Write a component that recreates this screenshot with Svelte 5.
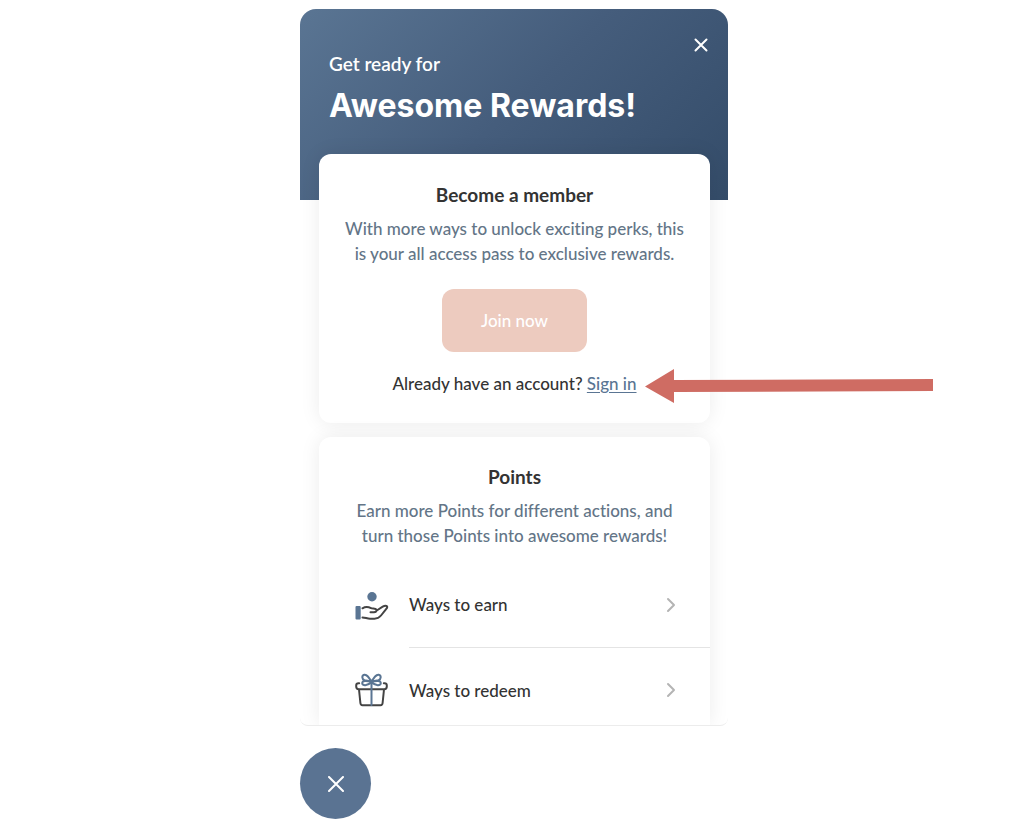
<script>
  const ways = [
    { label: 'Ways to earn', icon: 'earn' },
    { label: 'Ways to redeem', icon: 'redeem' }
  ];
</script>

<main>
  <div class="widget">
    <section class="panel">
      <header>
        <button class="close" aria-label="Close">
          <svg width="14" height="14" viewBox="0 0 14 14"><path d="M1.5 1.5 12.5 12.5M12.5 1.5 1.5 12.5" /></svg>
        </button>
        <p>Get ready for</p>
        <h1>Awesome Rewards!</h1>
      </header>

      <div class="cards">
        <article class="card member">
          <h2>Become a member</h2>
          <p class="copy">With more ways to unlock exciting perks, this<br />is your all access pass to exclusive rewards.</p>
          <button class="join">Join now</button>
          <p class="account">Already have an account? <a href="#signin">Sign in</a></p>
        </article>

        <article class="card points">
          <h2>Points</h2>
          <p class="copy">Earn more Points for different actions, and<br />turn those Points into awesome rewards!</p>
          <ul>
            {#each ways as way}
              <li>
                <a class="way" href={'#' + way.icon}>
                  {#if way.icon === 'earn'}
                    <svg class="icon" width="34" height="34" viewBox="0 0 34 34">
                      <circle cx="17" cy="8.700" r="4.700" class="fill" />
                      <rect x="0.500" y="18" width="5.200" height="13.500" rx="1" class="fill" />
                      <path class="dark" d="M7.500 20.300C10 18.700 13.500 18.800 16 20.200 17.500 21 20.500 19.800 21.300 21.500 21.900 23.300 20.800 24.200 19 24.200H15.500M21.800 22.500 27.700 18.700C29.500 17.600 31 17.300 32 18.300 32.900 19.300 31.800 20.400 30.700 21.600L26 27.500C24 29.900 22.500 30.700 19.500 30.700H15C12 30.700 10.500 29.500 7.500 29.400" />
                    </svg>
                  {:else}
                    <svg class="icon" width="34" height="34" viewBox="0 0 34 34">
                      <path class="dark" d="M4.200 10.200H3.500C1.900 10.200 1.200 11 1.200 12.500V13.500C1.200 15.200 2 16.200 3.700 16.200H29.300C31 16.200 31.800 15.200 31.800 13.500V12.500C31.800 11 31.100 10.200 29.500 10.200H28.800M4 16.500 5.400 30C5.500 31.400 6 32.200 7.500 32.200H25.500C27 32.200 27.500 31.400 27.600 30L29 16.500" />
                      <path class="blue" d="M16.500 9V32M16.500 8.500C14 4.500 12 1.200 9.300 1.700 6.500 2.400 6.800 6.200 9.500 7.200L16.500 8.500C19 4.500 21 1.200 23.700 1.700 26.500 2.400 26.200 6.200 23.500 7.200L16.500 8.500C12.500 8 7.500 7.200 7.200 10 7 13 12.500 13.200 16.500 9 20.500 13.200 26 13 25.800 10 25.500 7.200 20.500 8 16.500 8.500" />
                    </svg>
                  {/if}
                  <span>{way.label}</span>
                  <svg class="chevron" width="10" height="16" viewBox="0 0 10 16"><path d="M2 2 8 8 2 14" /></svg>
                </a>
              </li>
            {/each}
          </ul>
        </article>
      </div>
    </section>

    <svg class="arrow" width="288" height="34" viewBox="0 0 288 34"><path d="M0 17.500 29 0V11L288 10V22L29 23V34Z" /></svg>

    <button class="launcher" aria-label="Close rewards">
      <svg width="16" height="16" viewBox="0 0 16 16"><path d="M1 1 15 15M15 1 1 15" /></svg>
    </button>
  </div>
</main>

<style>
  :global(body) {
    background: #fff;
  }
  main {
    padding: 9px 24px 12px 28px;
    font-family: Lato, "Open Sans", sans-serif;
    font-weight: 500;
    font-variant-ligatures: none;
  }
  .widget {
    position: relative;
    max-width: 428px;
    margin: 0 auto;
  }
  h1, h2, p, ul {
    margin: 0;
    padding: 0;
  }
  button {
    border: 0;
    padding: 0;
    font: inherit;
    cursor: pointer;
  }
  svg path {
    fill: none;
    stroke: #fff;
    stroke-width: 2;
    stroke-linecap: round;
    stroke-linejoin: round;
  }
  .panel {
    overflow: hidden;
    border-radius: 16px 16px 8px 8px;
    border-bottom: 1px solid #ececec;
    background: #fff;
  }
  header {
    position: relative;
    height: 191px;
    box-sizing: border-box;
    padding: 41px 29px 0;
    color: #fff;
    background: linear-gradient(135deg, #5a7593 0%, #455d7c 50%, #344c69 100%);
  }
  header p {
    font-size: 19px;
    line-height: 28px;
    font-weight: 600;
  }
  h1 {
    margin-top: 4px;
    font-family: Inter, sans-serif;
    font-size: 32px;
    line-height: 48px;
    font-weight: 700;
  }
  .close {
    position: absolute;
    top: 24px;
    right: 15px;
    width: 24px;
    height: 24px;
    display: grid;
    place-items: center;
    background: none;
  }
  .cards {
    position: relative;
    display: grid;
    gap: 14px;
    margin-top: -46px;
    padding: 0 18px 0 19px;
  }
  .card {
    border-radius: 12px;
    background: #fff;
    box-shadow: 0 0 20px rgba(0, 0, 0, 0.08);
    text-align: center;
  }
  .member {
    padding: 27px 20px 26px;
  }
  .points {
    padding-top: 26px;
    border-radius: 12px 12px 0 0;
  }
  h2 {
    font-size: 19px;
    line-height: 28px;
    font-weight: 700;
    color: #333;
  }
  .copy {
    margin-top: 7px;
    font-size: 17px;
    line-height: 25px;
    color: #637587;
  }
  .join {
    width: 145px;
    height: 63px;
    margin-top: 23px;
    border-radius: 12px;
    background: #edcbbf;
    color: #fff;
    font-size: 17px;
  }
  .account {
    margin-top: 19px;
    font-size: 17px;
    line-height: 26px;
    color: #333;
  }
  .account a {
    color: #5a7593;
    text-underline-offset: 2px;
  }
  ul {
    margin-top: 14px;
    list-style: none;
  }
  .way {
    display: grid;
    grid-template-columns: 34px 1fr 10px;
    align-items: center;
    column-gap: 20px;
    height: 85px;
    padding: 0 34px 0 36px;
    color: #333;
    font-size: 17px;
    text-align: left;
    text-decoration: none;
  }
  li + li {
    background: linear-gradient(#e4e4e4, #e4e4e4) 90px 0 / 100% 1px no-repeat;
  }
  li:last-child .way {
    height: 78px;
    padding-top: 8px;
    box-sizing: border-box;
  }
  .fill {
    fill: #5a7593;
  }
  .icon .dark {
    stroke: #444;
  }
  .icon .blue {
    stroke: #5a7593;
  }
  .chevron path {
    stroke: #b4b4b4;
  }
  .arrow {
    position: absolute;
    top: 360px;
    left: 345px;
  }
  .arrow path {
    fill: #cf6c63;
    stroke: none;
  }
  .launcher {
    display: grid;
    place-items: center;
    width: 71px;
    height: 71px;
    margin-top: 22px;
    border-radius: 50%;
    background: #5a7392;
  }
</style>
